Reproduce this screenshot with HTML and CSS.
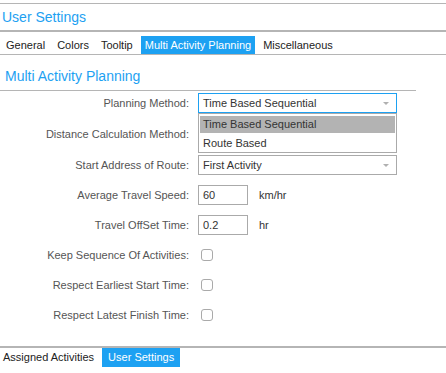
FILE: index.html
```html
<!DOCTYPE html>
<html>
<head>
    <title>User Settings</title>
    <link rel="stylesheet" href="styles.css">
</head>
<body>
    <div class="app">
        <div class="title">User Settings</div>
        <div class="tabs">
            <span class="tab">General</span>
            <span class="tab">Colors</span>
            <span class="tab">Tooltip</span>
            <span class="tab active">Multi Activity Planning</span>
            <span class="tab">Miscellaneous</span>
        </div>
        <div class="panel">
            <h3 class="heading">Multi Activity Planning</h3>
            <form class="form">
                <div class="field tall">
                    <label>Planning Method:</label>
                    <div class="combo">
                        <div class="select focused">Time Based Sequential<span class="arrow"></span></div>
                        <ul class="list">
                            <li class="selected">Time Based Sequential</li>
                            <li>Route Based</li>
                        </ul>
                    </div>
                </div>
                <div class="field tall">
                    <label>Distance Calculation Method:</label>
                    <!-- covered by the open list above -->
                    <div class="select"><span class="arrow"></span></div>
                </div>
                <div class="field">
                    <label>Start Address of Route:</label>
                    <div class="select">First Activity<span class="arrow"></span></div>
                </div>
                <div class="field">
                    <label>Average Travel Speed:</label>
                    <div class="control">
                        <input type="text" class="num" value="60">
                        <span class="unit">km/hr</span>
                    </div>
                </div>
                <div class="field">
                    <label>Travel OffSet Time:</label>
                    <div class="control">
                        <input type="text" class="num" value="0.2">
                        <span class="unit">hr</span>
                    </div>
                </div>
                <div class="field">
                    <label>Keep Sequence Of Activities:</label>
                    <div class="control"><input type="checkbox" class="check"></div>
                </div>
                <div class="field">
                    <label>Respect Earliest Start Time:</label>
                    <div class="control"><input type="checkbox" class="check"></div>
                </div>
                <div class="field">
                    <label>Respect Latest Finish Time:</label>
                    <div class="control"><input type="checkbox" class="check"></div>
                </div>
            </form>
        </div>
        <div class="footer">
            <span class="ftab first">Assigned Activities</span>
            <span class="ftab active">User Settings</span>
        </div>
    </div>
</body>
</html>
```

FILE: styles.css
```css
body {
    margin: 0;
    font-family: "Liberation Sans", Arial, sans-serif;
    font-size: 11px;
    color: #333;
    background-color: #fff;
}
.app {
    height: 373px;
    display: flex;
    flex-direction: column;
}
.title {
    margin-top: 3px;
    border-top: 1px solid #b5b5b5;
    border-bottom: 2px solid #b5b5b5;
    height: 21px;
    padding: 5px 0 0 2px;
    font-size: 14px;
    line-height: 16px;
    color: #1da1f2;
}
.tabs {
    display: flex;
    gap: 4px;
    padding: 4px 0 0 2px;
    border-bottom: 1px solid #b5b5b5;
}
.tab {
    padding: 0 4px;
    line-height: 18px;
    color: #222;
}
.tab.active {
    background-color: #1da1f2;
    color: #fff;
}
.panel {
    flex: 1;
}
.heading {
    margin: 0;
    width: 411px;
    padding: 13px 0 6px 5px;
    font-size: 14px;
    font-weight: normal;
    line-height: 16px;
    color: #1da1f2;
    border-bottom: 1px solid #b5b5b5;
}
.form {
    margin: 0;
    padding-top: 2px;
}
.field {
    display: grid;
    grid-template-columns: 189px 199px;
    column-gap: 9px;
    align-items: center;
    height: 20px;
    margin-bottom: 10px;
}
.field.tall {
    margin-bottom: 11px;
}
.field label {
    text-align: right;
    color: #555;
    line-height: 20px;
}
.combo {
    position: relative;
}
.select {
    position: relative;
    box-sizing: border-box;
    height: 20px;
    padding-left: 4px;
    border: 1px solid #aaa;
    line-height: 18px;
    color: #333;
    background-color: #fff;
}
.select.focused {
    border-color: #1da1f2;
}
.arrow {
    position: absolute;
    right: 7px;
    top: 8px;
    border-left: 3px solid transparent;
    border-right: 3px solid transparent;
    border-top: 3px solid #b0b0b0;
}
.list {
    position: absolute;
    left: 0;
    top: 100%;
    width: 100%;
    box-sizing: border-box;
    margin: 0;
    padding: 2px 1px 0;
    list-style: none;
    border: 1px solid #aaa;
    background-color: #fff;
    z-index: 2;
}
.list li {
    height: 17px;
    line-height: 17px;
    padding-left: 3px;
    color: #333;
}
.list li + li {
    margin-top: 2px;
}
.list li.selected {
    background-color: #b3b3b3;
}
.control {
    display: flex;
    align-items: center;
}
.num {
    box-sizing: border-box;
    width: 50px;
    height: 20px;
    margin: 0;
    padding: 0 4px;
    border: 1px solid #aaa;
    font-family: inherit;
    font-size: 11px;
    color: #333;
    outline: none;
}
.unit {
    margin-left: 11px;
    color: #333;
}
.check {
    appearance: none;
    width: 12px;
    height: 12px;
    margin: 0 0 0 3px;
    border: 1px solid #aaa;
    border-radius: 3px;
    background-color: #fff;
}
.footer {
    display: flex;
    gap: 2px;
    border-top: 2px solid #b5b5b5;
    margin-bottom: 6px;
}
.ftab {
    padding: 0 6px;
    line-height: 19px;
    color: #222;
}
.ftab.first {
    padding-left: 3px;
}
.ftab.active {
    background-color: #1da1f2;
    color: #fff;
}
```
